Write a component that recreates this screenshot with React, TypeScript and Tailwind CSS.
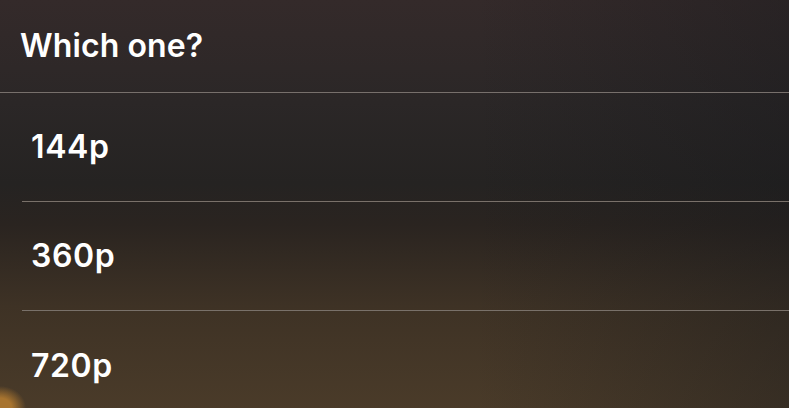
import React from 'react';

const options = ['144p', '360p', '720p'];

const App: React.FC = () => {
    return (
        <div
            className="relative h-[408px] w-[789px] overflow-hidden text-white bg-[radial-gradient(ellipse_26px_22px_at_0%_100%,#a8742f_0%,#a8742f_45%,transparent_100%),linear-gradient(to_bottom,#342a2a_0%,#2b2727_25%,#252322_45%,#2a2420_55%,#3e3225_75%,#4a3b29_100%)]"
            style={{ fontFamily: 'Inter, "Noto Sans", sans-serif' }}
        >
            <div className="absolute inset-0 bg-[linear-gradient(to_right,transparent_60%,rgba(20,22,26,0.35)_100%)]" />
            <div className="relative">
                <div className="flex h-[93px] items-center border-b border-[#77706c] pl-5">
                    <h1 className="text-[32px] font-semibold tracking-[0.1px]">Which one?</h1>
                </div>
                <div className="pl-[22px]">
                    {options.map((opt, i) => (
                        <div
                            key={opt}
                            className={`flex h-[109px] items-center pl-[9px] ${i < options.length - 1 ? 'border-b border-[#79716a]' : ''}`}
                        >
                            <span className="text-[32px] font-semibold tracking-[0.6px]">{opt}</span>
                        </div>
                    ))}
                </div>
            </div>
        </div>
    );
};

export default App;
